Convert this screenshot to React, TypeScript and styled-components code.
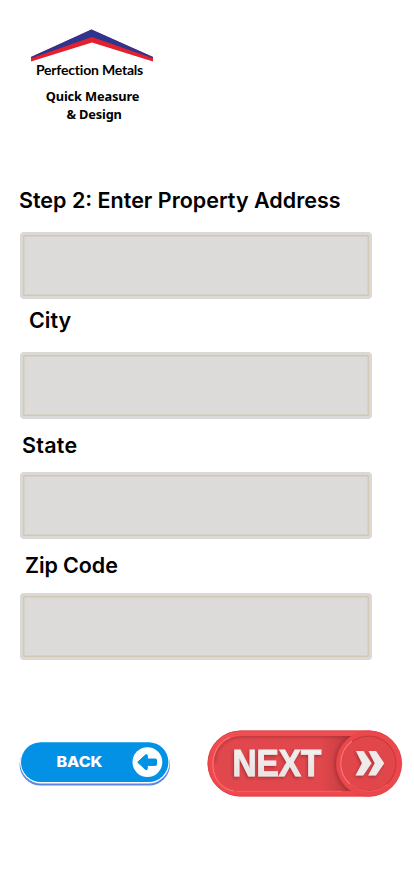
import React from "react";
import styled, { createGlobalStyle } from "styled-components";

const GlobalStyle = createGlobalStyle`
  * { box-sizing: border-box; }
  body { margin: 0; background: #fff; }
`;

const Page = styled.main`
  width: 414px;
  height: 896px;
  display: flex;
  flex-direction: column;
  background: #fff;
  color: #000;
  font-family: Inter, "Liberation Sans", sans-serif;
  overflow: hidden;
`;

const Brand = styled.header`
  display: flex;
  flex-direction: column;
  align-items: center;
  width: 185px;
  height: 184px;
  padding-top: 29px;
`;

const Roof = styled.svg`
  display: block;
  width: 122px;
  height: 33px;
  margin-right: 1px;
`;

const Company = styled.div`
  height: 16px;
  margin: 0 6px 0 0;
  font: 700 14px/16px Lato, sans-serif;
  letter-spacing: -0.2px;
  white-space: nowrap;
`;

const Tagline = styled.div`
  margin-top: 9px;
  font: 700 12.8px/18px "Noto Sans", sans-serif;
  letter-spacing: -0.15px;
  text-align: center;
  white-space: nowrap;
`;

const Form = styled.form`
  display: flex;
  flex-direction: column;
  height: 546px;
`;

const Label = styled.label<{ $indent: number; $top: number; $height: number; $spacing?: number }>`
  height: ${(p) => p.$height}px;
  padding-top: ${(p) => p.$top}px;
  padding-left: ${(p) => p.$indent}px;
  font-size: 21.5px;
  line-height: 26px;
  font-weight: 600;
  letter-spacing: ${(p) => p.$spacing ?? 0}px;
  white-space: nowrap;
`;

const Field = styled.input`
  width: 352px;
  height: 67px;
  margin: 0 0 0 20px;
  padding: 0 12px;
  border: 3px solid #dad9d7;
  border-radius: 4px;
  background: #dcdbd9;
  box-shadow: inset 0 0 0 1px #d3c6b3, inset 0 0 0 2px #d8d1c6;
  font: inherit;
  outline: none;
`;

const Actions = styled.nav`
  display: flex;
  align-items: flex-start;
  height: 68px;
  padding-left: 19px;
`;

const ActionButton = styled.button<{ $width: number; $height: number; $top?: number; $left?: number }>`
  width: ${(p) => p.$width}px;
  height: ${(p) => p.$height}px;
  margin: ${(p) => p.$top ?? 0}px 0 0 ${(p) => p.$left ?? 0}px;
  padding: 0;
  border: 0;
  background: none;
  cursor: pointer;
  flex: none;
`;

const Art = styled.svg`
  display: block;
  width: 100%;
  height: 100%;
`;

const BackButton = () => (
  <ActionButton type="button" aria-label="Back" $width={152} $height={46} $top={11}>
    <Art viewBox="0 0 152 46">
      <rect x="0.6" y="2.5" width="150.4" height="42" rx="21" fill="#5b87df" />
      <rect x="1" y="0" width="149.6" height="42.6" rx="21.3" fill="#fff" />
      <rect x="2" y="1.3" width="147.4" height="39.7" rx="19.8" fill="#0391e6" />
      <text x="37.4" y="26.4" fill="#fff" fontFamily="Inter, sans-serif" fontSize="14.2" fontWeight="800" textLength="46" lengthAdjust="spacingAndGlyphs">BACK</text>
      <circle cx="128.4" cy="21.1" r="14.9" fill="#fff" />
      <path d="M118.7 21.2 126.4 14q1.7-1.2 1.9.7v3.3h8.2q1 0 1 1v4.4q0 1-1 1h-8.2v3.3q-.2 1.9-1.9.7Z" fill="#0391e6" stroke="#0391e6" strokeWidth="1" strokeLinejoin="round" />
    </Art>
  </ActionButton>
);

const NextButton = () => (
  <ActionButton type="submit" aria-label="Next" $width={196} $height={68} $left={35.5}>
    <Art viewBox="0 0 196 68">
      <defs>
        <linearGradient id="rim" x1="0" y1="0" x2="0" y2="1">
          <stop offset="0" stopColor="#ef5054" />
          <stop offset="0.5" stopColor="#ed484d" />
          <stop offset="1" stopColor="#f0494d" />
        </linearGradient>
        <linearGradient id="shade" x1="0" y1="0" x2="1" y2="0">
          <stop offset="0" stopColor="#932a2e" stopOpacity="0" />
          <stop offset="1" stopColor="#872429" stopOpacity="0.5" />
        </linearGradient>
        <linearGradient id="letters" x1="0" y1="0" x2="0" y2="1">
          <stop offset="0" stopColor="#f5f3f2" />
          <stop offset="1" stopColor="#e4e0df" />
        </linearGradient>
        <filter id="drop" x="-20%" y="-30%" width="150%" height="170%">
          <feDropShadow dx="-1" dy="1.5" stdDeviation="1.4" floodColor="#741c20" floodOpacity="0.55" />
        </filter>
        <filter id="inner" x="-20%" y="-20%" width="140%" height="140%">
          <feGaussianBlur stdDeviation="1.5" />
        </filter>
        <clipPath id="well"><rect x="7" y="6" width="182" height="55" rx="27.5" /></clipPath>
      </defs>
      <rect x="0.5" y="0.5" width="194" height="66" rx="33" fill="url(#rim)" />
      <rect x="1" y="1" width="193" height="65" rx="32.5" fill="none" stroke="#dc4046" strokeWidth="0.8" />
      <rect x="7" y="6" width="182" height="55" rx="27.5" fill="#e1484d" />
      <g clipPath="url(#well)">
        <path d="M7 33C7 17 20 6 34 6H150" fill="none" stroke="#b7343a" strokeWidth="3" filter="url(#inner)" />
        <rect x="113" y="6" width="38" height="55" fill="url(#shade)" />
        <circle cx="160" cy="34" r="33" fill="#7c2024" opacity="0.4" filter="url(#inner)" />
      </g>
      <path d="M27 61.2C-1 57 0 15 23 7.5" fill="none" stroke="#ff7779" strokeWidth="1" />
      <path d="M30 61.3h105" stroke="#fb6265" strokeWidth="0.9" />
      <text x="25.5" y="45.8" fill="url(#letters)" filter="url(#drop)" fontFamily="Liberation Sans, sans-serif" fontSize="36" fontWeight="700" stroke="#eeeaea" strokeWidth="1" textLength="89" lengthAdjust="spacingAndGlyphs">NEXT</text>
      <circle cx="162" cy="33.6" r="32.7" fill="#ec484c" stroke="#df4348" strokeWidth="0.7" />
      <circle cx="161.5" cy="33.5" r="27.4" fill="#e1464b" stroke="#c63b41" strokeWidth="1.2" />
      <path d="M143 54C130 42 131 22 145 11" fill="none" stroke="#ff7779" strokeWidth="1.2" />
      <path d="M143 54Q162 69 181 54" fill="none" stroke="#f65a5e" strokeWidth="1" />
      <g fill="#eeeaea" filter="url(#drop)">
        <path d="M149 21h7.5l8 12.2-8.3 12.3h-7.7l6.5-12.3Z" />
        <path d="M161.5 21h7.5l8.2 12.2-8.3 12.3h-7.7l6.5-12.3Z" />
      </g>
    </Art>
  </ActionButton>
);

export default function App() {
  return (
    <>
      <GlobalStyle />
      <Page>
        <Brand>
          <Roof viewBox="0 0 122 33">
            <path d="M0 28 60.5.5 122 28v4.5L61 13.5 0 32.5Z" fill="#e3202e" />
            <path d="M0 28 60.5.5 122 28v1.3L61 8 0 29.3Z" fill="#2c3590" />
          </Roof>
          <Company>Perfection Metals</Company>
          <Tagline>Quick Measure<br />&nbsp;&amp; Design</Tagline>
        </Brand>
        <Form>
          <Label htmlFor="address" $indent={19} $top={3} $height={48}>Step 2: Enter Property Address</Label>
          <Field id="address" />
          <Label htmlFor="city" $indent={29} $top={8} $height={53}>City</Label>
          <Field id="city" />
          <Label htmlFor="state" $indent={22} $top={13} $height={53} $spacing={0.25}>State</Label>
          <Field id="state" />
          <Label htmlFor="zip" $indent={25} $top={13} $height={53.5} $spacing={-0.1}>Zip Code</Label>
          <Field id="zip" />
        </Form>
        <Actions>
          <BackButton />
          <NextButton />
        </Actions>
      </Page>
    </>
  );
}
